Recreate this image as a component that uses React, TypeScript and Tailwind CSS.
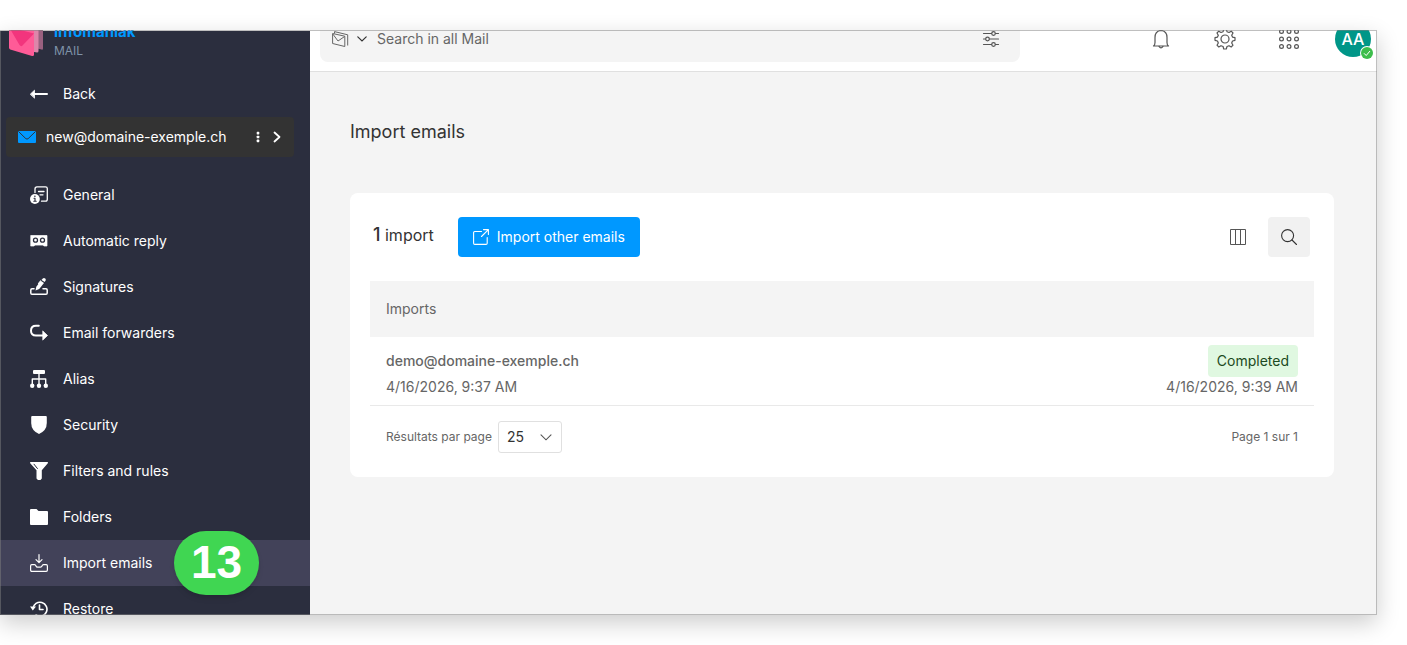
import type { ReactNode } from "react";

function NavIcon({ children }: { children: ReactNode }) {
  return (
    <svg
      viewBox="0 0 18 18"
      className="size-[18px] shrink-0"
      fill="none"
      stroke="currentColor"
      strokeWidth="1.5"
      strokeLinecap="round"
      strokeLinejoin="round"
      aria-hidden="true"
    >
      {children}
    </svg>
  );
}

const items: { label: string; icon: ReactNode; active?: boolean }[] = [
  {
    label: "General",
    icon: (
      <NavIcon>
        <path d="M5 6.500V3Q5 .8 7 .8H15.500Q17.300 .8 17.300 2.500V13.300Q17.300 15.200 15.500 15.200H11.500" strokeWidth="1.300" />
        <path d="M8.500 5.500H14M10 8.800H13" strokeWidth="1.300" />
        <circle cx="4.900" cy="13" r="4.900" fill="currentColor" stroke="none" />
        <path d="M4 12.300H5V15.200M3.800 15.300H6.200" stroke="#2b2e3e" strokeWidth="1.100" />
        <circle cx="4.900" cy="10.300" r=".8" fill="#2b2e3e" stroke="none" />
      </NavIcon>
    ),
  },
  {
    label: "Automatic reply",
    icon: (
      <NavIcon>
        <path d="M1 3.500H17V14H14L13 13.100H5L4 14H1Z" fill="currentColor" strokeWidth="0.700" />
        <circle cx="5.500" cy="8.200" r="2" stroke="#2b2e3e" strokeWidth="1.300" />
        <circle cx="12.500" cy="8.200" r="2" stroke="#2b2e3e" strokeWidth="1.300" />
      </NavIcon>
    ),
  },
  {
    label: "Signatures",
    icon: (
      <NavIcon>
        <path d="M4 10.800H2Q.8 10.800 .8 12V15Q.8 16.300 2 16.300H16Q17.200 16.300 17.200 15V12Q17.200 10.800 16 10.800H13" />
        <path d="M5.500 12.500L6.300 8.800L10.800 2.800L14 5L9.200 10.900Z" fill="currentColor" stroke="none" />
        <path d="M11.500 1.900L12.800 .5Q14 -.3 15.200 .6Q16.200 1.600 15.500 2.800L14.700 4Z" fill="currentColor" stroke="none" />
        <path d="M10.500 3L8.500 5.500" strokeWidth="1.200" />
      </NavIcon>
    ),
  },
  {
    label: "Email forwarders",
    icon: (
      <NavIcon>
        <path d="M8.800 1.800H6Q1 1.800 1 6.700Q1 11.500 6 11.500H13" strokeWidth="2" />
        <path d="M13 7.200L17.500 11.500L13 15.800Z" fill="currentColor" strokeWidth="0.800" />
      </NavIcon>
    ),
  },
  {
    label: "Alias",
    icon: (
      <NavIcon>
        <rect x="3" y="0" width="12" height="4" rx="1" fill="currentColor" stroke="none" />
        <path d="M9 4V14M2.300 14V9H15.700V14" strokeWidth="1.400" />
        <circle cx="2.200" cy="15.700" r="2.200" fill="currentColor" stroke="none" />
        <circle cx="9" cy="15.700" r="2.200" fill="currentColor" stroke="none" />
        <circle cx="15.800" cy="15.700" r="2.200" fill="currentColor" stroke="none" />
      </NavIcon>
    ),
  },
  {
    label: "Security",
    icon: (
      <NavIcon>
        <path d="M2.200 0H15.800Q16.800 0 16.800 1V7Q16.800 14.500 9 18Q1.200 14.500 1.200 7V1Q1.200 0 2.200 0Z" fill="currentColor" stroke="none" />
      </NavIcon>
    ),
  },
  {
    label: "Filters and rules",
    icon: (
      <NavIcon>
        <path d="M.5 0H17.500Q18.300 .4 17.800 1.200L11.800 8.200V16.500L10.500 18H8L6.500 16.500V8.200L.2 1.200Q-.2 .4 .5 0Z" fill="currentColor" stroke="none" />
        <path d="M4 2.200L7.400 6.500" stroke="#2b2e3e" strokeWidth="1" />
      </NavIcon>
    ),
  },
  {
    label: "Folders",
    icon: (
      <NavIcon>
        <path d="M1 1H6.500L8.500 3H17Q18 3 18 4V16Q18 17 17 17H1Q0 17 0 16V2Q0 1 1 1Z" fill="currentColor" stroke="none" />
      </NavIcon>
    ),
  },
  {
    label: "Import emails",
    active: true,
    icon: (
      <NavIcon>
        <path d="M9 .6V8.500M6 5.700L9 8.700L12 5.700" strokeWidth="1.200" />
        <path d="M1.800 10.600H4.500Q5.500 10.600 6 12Q6.400 13.100 7.500 13.100H10.500Q11.600 13.100 12 12Q12.500 10.600 13.500 10.600H16.200Q17.400 10.600 17.400 12V16Q17.400 17.300 16.200 17.300H1.800Q.6 17.300 .6 16V12Q.6 10.600 1.800 10.600Z" strokeWidth="1.200" />
      </NavIcon>
    ),
  },
  {
    label: "Restore",
    icon: (
      <NavIcon>
        <path d="M3 8.500A7 7 0 1 1 6 15" strokeWidth="1.600" />
        <path d="M0 6.500H6L2.800 10.500Z" fill="currentColor" stroke="none" />
        <path d="M9.500 5V9.500H13" strokeWidth="1.600" />
      </NavIcon>
    ),
  },
];

function Sidebar() {
  return (
    <aside className="w-[310px] shrink-0 bg-[#2b2e3e] text-sm text-white">
      <div className="-mt-6">
        <a href="#mail" className="flex h-16 items-center gap-2.5 pl-[9px]">
          <svg viewBox="0 0 35 36" className="h-9 w-[35px] shrink-0" aria-hidden="true">
            <path d="M14 4L34 9V27.500Q34 29 32.500 28.600L14 24Z" fill="#99607f" />
            <path d="M8 4L29.500 9V30Q29.500 31.500 28 31.500L8 28Z" fill="#dd86aa" />
            <path d="M0 6L25 10V33.500Q25 35.500 23 35L1.200 28.500Q0 28 0 26.500Z" fill="#ff5b97" />
            <path d="M0 6L25 12.500L13.500 24.500Q12 26 10.500 24Z" fill="#f2357d" />
          </svg>
          <span className="flex flex-col pt-1">
            <strong className="text-[15px] leading-5 font-bold text-[#0098ff]">infomaniak</strong>
            <span className="text-xs leading-[18px] text-[#7f93a8]">MAIL</span>
          </span>
        </a>
        <a href="#back" className="flex h-[46px] items-center gap-[15px] pl-[30px]">
          <NavIcon>
            <path d="M4 9H17" strokeWidth="2" />
            <path d="M.5 9L4.500 5.200V12.800Z" fill="currentColor" strokeWidth="0.800" />
          </NavIcon>
          Back
        </a>
        <div className="mr-4 ml-1.5 flex h-10 items-center rounded bg-[#333] pr-3 pl-3">
          <svg viewBox="0 0 18 12" className="h-3 w-[18px]" aria-hidden="true">
            <rect width="18" height="12" rx="1" fill="#0098ff" />
            <path d="M.5 .5L7.800 7.600Q9 8.600 10.200 7.600L17.500 .5" fill="none" stroke="#333" strokeWidth="1" />
          </svg>
          <span className="ml-2.5 flex-1">new@domaine-exemple.ch</span>
          <button type="button" aria-label="Account options" className="mr-3">
            <svg viewBox="0 0 4 12" className="h-3 w-1" fill="currentColor" aria-hidden="true">
              <rect x=".7" y=".8" width="2.600" height="2.600" rx=".6" />
              <rect x=".7" y="4.700" width="2.600" height="2.600" rx=".6" />
              <rect x=".7" y="8.600" width="2.600" height="2.600" rx=".6" />
            </svg>
          </button>
          <button type="button" aria-label="Switch account">
            <svg viewBox="0 0 10 12" className="h-3 w-2.5" fill="none" stroke="currentColor" strokeWidth="1.800" strokeLinecap="round" strokeLinejoin="round" aria-hidden="true">
              <path d="M2.500 1.500L7.500 6L2.500 10.500" />
            </svg>
          </button>
        </div>
        <nav className="mt-[15px]">
          {items.map(({ label, icon, active }) => (
            <a
              key={label}
              href={"#" + label.toLowerCase().replaceAll(" ", "-")}
              className={
                active
                  ? "relative flex h-[46px] items-center gap-[15px] bg-[#424259] pl-[30px]"
                  : "flex h-[46px] items-center gap-[15px] pl-[30px]"
              }
            >
              {icon}
              {label}
              {active && (
                <span className="absolute top-1/2 left-[174px] z-10 flex h-16 w-[85px] -translate-y-1/2 items-center justify-center rounded-full bg-[#40d652] font-['Liberation_Sans',sans-serif] text-[46px] font-bold shadow-md">
                  13
                </span>
              )}
            </a>
          ))}
        </nav>
      </div>
    </aside>
  );
}

function TopBar() {
  return (
    <header className="-mt-6 flex h-[65px] shrink-0 items-center justify-between border-b border-[#e0e0e0] bg-white pr-1.5 pl-2.5">
      <div className="flex h-[46px] w-[700px] items-center rounded-lg bg-[#f4f4f4] pr-5 pl-3 text-[#666]">
        <button type="button" aria-label="Search scope" className="flex items-center gap-2">
          <svg viewBox="0 0 17 16" className="h-4 w-[17px]" fill="none" stroke="#666" strokeWidth="1" strokeLinejoin="round" aria-hidden="true">
            <path d="M.6 2.500L12.800 5.200V15.500L.6 12.500Z" />
            <path d="M.8 3L6 10L12.600 5.500" />
            <path d="M2.500 2.500V.6L15.700 3.800V14.500" />
          </svg>
          <svg viewBox="0 0 10 6" className="h-1.5 w-2.5" fill="none" stroke="#333" strokeWidth="1.200" strokeLinecap="round" aria-hidden="true">
            <path d="M.8 .8L5 5L9.200 .8" />
          </svg>
        </button>
        <input
          type="text"
          aria-label="Search in all Mail"
          placeholder="Search in all Mail"
          className="ml-2.5 min-w-0 flex-1 bg-transparent text-sm outline-none placeholder:text-[#666]"
        />
        <button type="button" aria-label="Search filters">
          <svg viewBox="0 0 18 16" className="h-4 w-[18px]" fill="none" stroke="#555" strokeWidth="1.200" strokeLinecap="round" aria-hidden="true">
            <path d="M1.500 2.500H9.500M13.500 2.500H16.500M1.500 8H3.500M7.500 8H16.500M1.500 13.500H9.500M13.500 13.500H16.500" />
            <circle cx="11.500" cy="2.500" r="1.800" />
            <circle cx="5.500" cy="8" r="1.800" />
            <circle cx="11.500" cy="13.500" r="1.800" />
          </svg>
        </button>
      </div>
      <div className="flex items-center">
        <button type="button" aria-label="Notifications" className="mr-[43px]">
          <svg viewBox="0 0 20 20" className="size-5" fill="none" stroke="#555" strokeWidth="1.200" strokeLinecap="round" strokeLinejoin="round" aria-hidden="true">
            <path d="M2.500 17Q4 16.200 4 13.500V8.500Q4 2 10 1.400Q16 2 16 8.500V13.500Q16 16.200 17.500 17Z" />
            <path d="M8 17.400Q10 20.400 12 17.400" />
          </svg>
        </button>
        <button type="button" aria-label="Settings" className="mr-[43px]">
          <svg viewBox="0 0 22 22" className="size-[22px]" fill="none" stroke="#555" strokeWidth="1.200" strokeLinejoin="round" aria-hidden="true">
            <circle cx="11" cy="11" r="4" />
            <path d="M9.700 1.200H12.300L13 3.700L15 4.500L17.200 3.200L19 5L17.700 7.200L18.500 9.100L21 9.700V12.300L18.500 13L17.700 15L19 17.200L17.200 19L15 17.700L13 18.500L12.300 21H9.700L9.100 18.500L7 17.700L4.800 19L3 17.200L4.300 15L3.500 13L1 12.300V9.700L3.500 9.100L4.300 7.200L3 5L4.800 3.200L7 4.500L9.100 3.700Z" />
          </svg>
        </button>
        <button type="button" aria-label="Applications" className="mr-9">
          <svg viewBox="0 0 20 20" className="size-5" fill="none" stroke="#555" strokeWidth="1.200" aria-hidden="true">
            {[2.500, 10, 17.500].map((y) =>
              [2.500, 10, 17.500].map((x) => <circle key={x + "-" + y} cx={x} cy={y} r="1.900" />),
            )}
          </svg>
        </button>
        <button type="button" aria-label="Profile" className="relative flex size-9 items-center justify-center rounded-full bg-[#009688] text-base font-medium text-white">
          AA
          <svg viewBox="0 0 14 14" className="absolute -right-[3px] -bottom-[3px] size-3.5" aria-hidden="true">
            <circle cx="7" cy="7" r="7" fill="#fff" />
            <circle cx="7" cy="7" r="6" fill="#3dbd4b" />
            <path d="M4 7.300L6.200 9.500L10 5" fill="none" stroke="#fff" strokeWidth="1" />
          </svg>
        </button>
      </div>
    </header>
  );
}

function ImportsPanel() {
  return (
    <section className="mt-[47px] rounded-lg bg-white px-5 pt-6 pb-6">
      <div className="flex h-10 items-center pr-1 pl-[3px]">
        <p className="pb-1 text-base text-[#333]">
          <strong className="text-lg font-medium">1</strong> import
        </p>
        <button type="button" className="ml-6 flex h-10 items-center gap-2 rounded bg-[#0098ff] px-[15px] text-sm text-white">
          <svg viewBox="0 0 16 16" className="size-4" fill="none" stroke="currentColor" strokeWidth="1.100" strokeLinecap="round" strokeLinejoin="round" aria-hidden="true">
            <path d="M8.500 2.500H1.800Q.6 2.500 .6 3.700V14.200Q.6 15.400 1.800 15.400H13Q14.200 15.400 14.200 14.200V8.500" />
            <path d="M8.500 7.500L15.400 .7M10.500 .6H15.400V5.500" />
          </svg>
          Import other emails
        </button>
        <button type="button" aria-label="Columns" className="mr-[22px] ml-auto">
          <svg viewBox="0 0 16 16" className="size-4" fill="none" stroke="#555" strokeWidth="1" aria-hidden="true">
            <path d="M.5 .5H15.500V15.500H.5ZM5.500 .5V15.500M10.500 .5V15.500" strokeLinejoin="round" />
          </svg>
        </button>
        <button type="button" aria-label="Search imports" className="flex h-10 w-[42px] items-center justify-center rounded bg-[#f1f1f1]">
          <svg viewBox="0 0 16 16" className="size-4" fill="none" stroke="#333" strokeWidth="1.100" strokeLinecap="round" aria-hidden="true">
            <circle cx="6.600" cy="6.600" r="6" />
            <path d="M11 11L15.500 15.500" />
          </svg>
        </button>
      </div>
      <table className="mt-6 w-full border-collapse text-sm text-[#666]">
        <thead>
          <tr className="h-14 bg-[#f4f4f4] text-left">
            <th colSpan={2} className="px-4 font-normal">Imports</th>
          </tr>
        </thead>
        <tbody>
          <tr className="border-b border-[#e9e9e9]">
            <td className="px-4 py-2">
              <div className="flex h-8 items-center font-medium">demo@domaine-exemple.ch</div>
              <div className="leading-5">4/16/2026, 9:37 AM</div>
            </td>
            <td className="px-4 py-2 text-right">
              <div className="flex justify-end">
                <span className="flex h-8 items-center rounded bg-[#e0f8e1] px-[9px] text-[#1c4a22]">Completed</span>
              </div>
              <div className="leading-5">4/16/2026, 9:39 AM</div>
            </td>
          </tr>
        </tbody>
      </table>
      <div className="mt-[15px] flex items-center justify-between px-4 text-xs text-[#666]">
        <div className="flex items-center gap-1.5">
          <label htmlFor="page-size">Résultats par page</label>
          <div className="relative">
            <select id="page-size" defaultValue="25" className="h-8 w-16 appearance-none rounded-[3px] border border-[#e0e0e0] bg-white pl-2 text-sm text-[#333]">
              <option>25</option>
              <option>50</option>
              <option>100</option>
            </select>
            <svg viewBox="0 0 12 7" className="pointer-events-none absolute top-[13px] right-2.5 h-[7px] w-3" fill="none" stroke="#555" strokeWidth="1.100" strokeLinecap="round" aria-hidden="true">
              <path d="M1 .8L6 5.800L11 .8" />
            </svg>
          </div>
        </div>
        <span>Page 1 sur 1</span>
      </div>
    </section>
  );
}

export default function App() {
  return (
    <div className="flex h-screen bg-white pt-[30px] pr-[30px] pb-[30px] font-[Inter,sans-serif]">
      <div className="relative flex min-w-0 flex-1 shadow-[0_8px_22px_rgba(0,0,0,0.2)]">
        <div className="flex min-w-0 flex-1 overflow-hidden pt-px">
          <Sidebar />
          <div className="flex min-w-0 flex-1 flex-col bg-[#f4f4f4]">
            <TopBar />
            <main className="flex-1 pt-[46px] pr-[43px] pl-10">
              <h1 className="text-lg leading-7 text-[#333]">Import emails</h1>
              <ImportsPanel />
            </main>
          </div>
        </div>
        <div className="pointer-events-none absolute inset-0 border border-[#808080]/50" />
      </div>
    </div>
  );
}
